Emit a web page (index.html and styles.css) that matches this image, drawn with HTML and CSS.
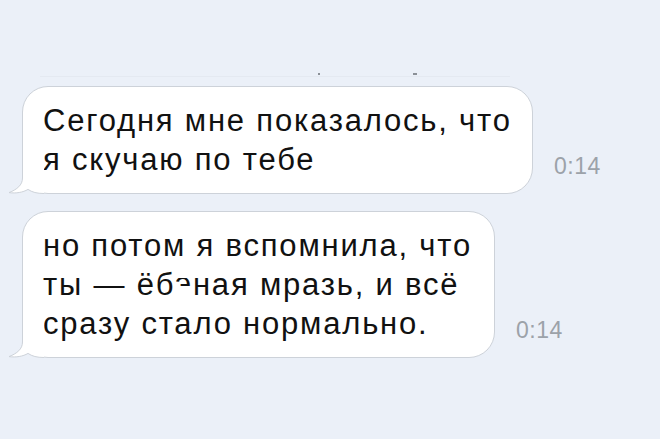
FILE: index.html
```html
<!DOCTYPE html>
<html lang="ru">
<head>
    <meta charset="UTF-8">
    <meta name="viewport" content="width=device-width, initial-scale=1.0">
    <title>Диалог</title>

    <link rel="stylesheet" href="styles.css">

</head>
<body>
    <div id="chat">
        <div class="divider">
            <span class="mark" id="markDot"></span>
            <span class="mark" id="markDash"></span>
        </div>

        <div class="msg">
            <div class="bubble" id="first">
                Сегодня мне показалось, что<br>
                я скучаю по тебе
                <svg class="tail" width="36" height="40" viewBox="0 0 36 40">
                    <path class="tail-fill" d="M14.5 0 L14.5 24 C14.5 31 9 35.5 1 38.6 C8 39.6 15 38.4 20 35.4 C24 38.2 29 39.5 36 39.5 L36 0 Z"/>
                    <path class="tail-line" d="M14.5 0 L14.5 24 C14.5 31 9 35.5 1 38.6 C8 39.6 15 38.4 20 35.4 C24 38.2 29 39.5 36 39.5"/>
                </svg>
            </div>
            <span class="time">0:14</span>
        </div>

        <div class="msg">
            <div class="bubble" id="second">
                но потом я вспомнила, что<br>
                ты — ёб<span class="cut"><span>э</span></span>ная мразь, и всё<br>
                сразу стало нормально.
                <svg class="tail" width="36" height="40" viewBox="0 0 36 40">
                    <path class="tail-fill" d="M14.5 0 L14.5 24 C14.5 31 9 35.5 1 38.6 C8 39.6 15 38.4 20 35.4 C24 38.2 29 39.5 36 39.5 L36 0 Z"/>
                    <path class="tail-line" d="M14.5 0 L14.5 24 C14.5 31 9 35.5 1 38.6 C8 39.6 15 38.4 20 35.4 C24 38.2 29 39.5 36 39.5"/>
                </svg>
            </div>
            <span class="time">0:14</span>
        </div>
    </div>
</body>
</html>
```

FILE: styles.css
```css
* {
    margin: 0;
    padding: 0;
    box-sizing: border-box;
}

body {
    background-color: #ebf0f8;
    font-family: "Liberation Sans", Arial, sans-serif;
    color: #111;
}

#chat {
    padding: 76px 0 0 22px;
}

.divider {
    position: relative;
    width: 470px;
    height: 1px;
    margin: 0 0 9px 18px;
    background-color: #e4e9f1;
}
.mark {
    position: absolute;
    top: -3px;
    height: 2px;
    background-color: #8b9097;
}
#markDot {
    left: 278px;
    width: 2px;
}
#markDash {
    left: 373px;
    width: 4px;
}

.msg {
    display: flex;
    align-items: flex-end;
    gap: 21px;
    margin-bottom: 17px;
}

.bubble {
    position: relative;
    background-color: white;
    border: 1px solid #cdd2d9;
    border-radius: 26px;
    padding: 14px 0 14px 20px;
    font-size: 31px;
    line-height: 39px;
    letter-spacing: 1.8px;
    white-space: nowrap;
}
#first {
    width: 511px;
}
#second {
    width: 473px;
}

/* хвостик пузыря в левом нижнем углу */
.tail {
    position: absolute;
    left: -15px;
    bottom: -1px;
}
.tail-fill {
    fill: white;
}
.tail-line {
    fill: none;
    stroke: #cdd2d9;
    stroke-width: 1;
}

/* обрезанная буква */
.cut {
    display: inline-block;
    height: 0.26em;
    overflow: hidden;
    vertical-align: 0.3em;
}
.cut span {
    display: block;
    line-height: 1em;
    margin-top: -0.31em;
}

.time {
    font-size: 23px;
    line-height: 26px;
    letter-spacing: 0.5px;
    color: #9ca2a9;
    margin-bottom: 15px;
}
```
